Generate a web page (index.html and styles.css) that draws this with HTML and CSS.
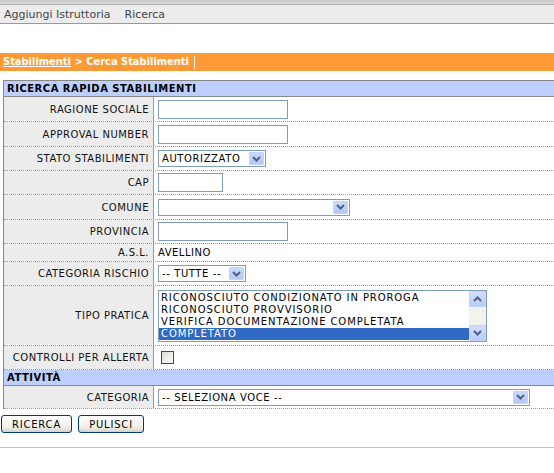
FILE: index.html
```html
<!DOCTYPE html>
<html>
<head>
<meta charset="utf-8">
<link rel="stylesheet" href="styles.css">
</head>
<body>
<div class="topstrip"></div>
<nav class="menu">
  <span class="menu-item">Aggiungi Istruttoria</span>
  <span class="menu-item">Ricerca</span>
</nav>
<div class="crumbs"><a class="crumb-link">Stabilimenti</a> &gt; Cerca Stabilimenti<span class="caret"></span></div>

<div class="form">
  <div class="section">RICERCA RAPIDA STABILIMENTI</div>
  <div class="row h25">
    <div class="label">RAGIONE SOCIALE</div>
    <div class="value"><span class="input w130"></span></div>
  </div>
  <div class="row h25">
    <div class="label">APPROVAL NUMBER</div>
    <div class="value"><span class="input w130"></span></div>
  </div>
  <div class="row">
    <div class="label">STATO STABILIMENTI</div>
    <div class="value"><span class="select w108"><span class="sel-text">AUTORIZZATO</span><span class="arrow"><svg width="9" height="6" viewBox="0 0 9 6"><path d="M1 1 L4.5 4.5 L8 1" fill="none" stroke="#4d6185" stroke-width="2"/></svg></span></span></div>
  </div>
  <div class="row">
    <div class="label">CAP</div>
    <div class="value"><span class="input w65"></span></div>
  </div>
  <div class="row h25">
    <div class="label">COMUNE</div>
    <div class="value"><span class="select w192"><span class="sel-text"></span><span class="arrow"><svg width="9" height="6" viewBox="0 0 9 6"><path d="M1 1 L4.5 4.5 L8 1" fill="none" stroke="#4d6185" stroke-width="2"/></svg></span></span></div>
  </div>
  <div class="row">
    <div class="label">PROVINCIA</div>
    <div class="value"><span class="input w130"></span></div>
  </div>
  <div class="row short">
    <div class="label">A.S.L.</div>
    <div class="value"><span class="plain">AVELLINO</span></div>
  </div>
  <div class="row">
    <div class="label">CATEGORIA RISCHIO</div>
    <div class="value"><span class="select w88"><span class="sel-text">-- TUTTE --</span><span class="arrow"><svg width="9" height="6" viewBox="0 0 9 6"><path d="M1 1 L4.5 4.5 L8 1" fill="none" stroke="#4d6185" stroke-width="2"/></svg></span></span></div>
  </div>
  <div class="row tall">
    <div class="label">TIPO PRATICA</div>
    <div class="value">
      <div class="listbox">
        <div class="options">
          <div class="opt">RICONOSCIUTO CONDIZIONATO IN PROROGA</div>
          <div class="opt">RICONOSCIUTO PROVVISORIO</div>
          <div class="opt">VERIFICA DOCUMENTAZIONE COMPLETATA</div>
          <div class="opt selected">COMPLETATO</div>
        </div>
        <div class="scrollbar">
          <span class="sbtn"><svg width="9" height="6" viewBox="0 0 9 6"><path d="M1 5 L4.5 1.5 L8 5" fill="none" stroke="#4d6185" stroke-width="2"/></svg></span>
          <span class="strack"></span>
          <span class="sbtn"><svg width="9" height="6" viewBox="0 0 9 6"><path d="M1 1 L4.5 4.5 L8 1" fill="none" stroke="#4d6185" stroke-width="2"/></svg></span>
        </div>
      </div>
    </div>
  </div>
  <div class="row">
    <div class="label">CONTROLLI PER ALLERTA</div>
    <div class="value"><span class="checkbox"></span></div>
  </div>
  <div class="section">ATTIVITÀ</div>
  <div class="row compact">
    <div class="label">CATEGORIA</div>
    <div class="value"><span class="select w372"><span class="sel-text">-- SELEZIONA VOCE --</span><span class="arrow"><svg width="9" height="6" viewBox="0 0 9 6"><path d="M1 1 L4.5 4.5 L8 1" fill="none" stroke="#4d6185" stroke-width="2"/></svg></span></span></div>
  </div>
</div>

<div class="buttons">
  <button class="btn b1">RICERCA</button>
  <button class="btn b2">PULISCI</button>
</div>
<div class="footer-line"></div>
</body>
</html>
```

FILE: styles.css
```css
html, body {
  margin: 0;
  padding: 0;
  background: #ffffff;
  overflow: hidden;
}
body {
  font-family: "DejaVu Sans", Verdana, sans-serif;
  font-size: 10px;
  color: #000;
}
.topstrip {
  height: 5px;
  background: linear-gradient(#c9c9c9, #dadada);
  border-bottom: 1px solid #b0b0b0;
  box-sizing: border-box;
}
.menu {
  height: 19px;
  background: #ededed;
  border-bottom: 1px solid #999;
  box-sizing: border-box;
  display: flex;
  align-items: center;
  padding-left: 4px;
  gap: 14px;
  font-size: 11px;
  color: #444;
}
.crumbs {
  margin-top: 29px;
  height: 18px;
  background: #fe9a35;
  color: #fff;
  font-family: "DejaVu Sans Condensed", "DejaVu Sans", sans-serif;
  font-weight: bold;
  font-size: 11px;
  line-height: 18px;
  padding-left: 3px;
  display: flex;
  align-items: center;
  white-space: pre;
}
.crumb-link {
  color: #fff;
  text-decoration: underline;
}
.caret {
  display: inline-block;
  width: 1px;
  height: 13px;
  background: #fff;
  margin-left: 5px;
}
.form {
  margin-top: 9px;
  margin-left: 3px;
  border-top: 1px solid #888;
  border-left: 1px solid #888;
}
.section {
  height: 16px;
  background: #bccfff;
  border-bottom: 1px solid #888;
  box-sizing: border-box;
  font-weight: bold;
  letter-spacing: 0.5px;
  line-height: 15px;
  padding-left: 3px;
}
.row {
  display: grid;
  grid-template-columns: 150px 1fr;
  height: 24px;
  border-bottom: 1px dotted #999;
  box-sizing: border-box;
}
.row.h25 { height: 25px; }
.row.short { height: 18px; }
.row.tall { height: 60px; }
.row.compact { height: 23px; }
.label {
  background: #ececec;
  border-right: 1px solid #999;
  display: flex;
  align-items: center;
  justify-content: flex-end;
  padding-right: 4px;
  letter-spacing: 0.5px;
  white-space: nowrap;
  color: #111;
}
.value {
  display: flex;
  align-items: center;
  padding-left: 4px;
}
.plain {
  letter-spacing: 0.5px;
}
.input {
  display: block;
  height: 19px;
  border: 1px solid #7f9db9;
  box-sizing: border-box;
  background: #fff;
}
.w130 { width: 130px; }
.w65 { width: 65px; }
.select {
  display: flex;
  align-items: center;
  height: 17px;
  border: 1px solid #7f9db9;
  box-sizing: border-box;
  background: #fff;
  padding: 1px;
  letter-spacing: 0.6px;
}
.w108 { width: 108px; }
.w192 { width: 192px; }
.w88 { width: 88px; }
.w372 { width: 372px; }
.sel-text {
  flex: 1;
  padding-left: 2px;
  white-space: nowrap;
  overflow: hidden;
}
.arrow {
  width: 15px;
  height: 13px;
  background: linear-gradient(#c9d9fd, #b4c8f6);
  border: 1px solid #c3d3fd;
  box-sizing: border-box;
  border-radius: 1px;
  display: flex;
  align-items: center;
  justify-content: center;
}
.listbox {
  width: 329px;
  height: 52px;
  border: 1px solid #7f9db9;
  box-sizing: border-box;
  display: flex;
  background: #fff;
}
.options {
  flex: 1;
  padding-top: 1px;
  letter-spacing: 0.9px;
  overflow: hidden;
}
.opt {
  height: 12px;
  line-height: 12px;
  padding-left: 2px;
  white-space: nowrap;
}
.opt.selected {
  background: #316ac5;
  color: #fff;
}
.scrollbar {
  width: 17px;
  display: flex;
  flex-direction: column;
  background: #f3f3ee;
}
.sbtn {
  height: 16px;
  background: linear-gradient(#d2defc, #b9cbf7);
  border: 1px solid #c3d3fd;
  box-sizing: border-box;
  display: flex;
  align-items: center;
  justify-content: center;
}
.strack { flex: 1; }
.checkbox {
  display: block;
  margin-left: 3px;
  width: 13px;
  height: 13px;
  border: 1px solid #1c5180;
  box-sizing: border-box;
  background: linear-gradient(135deg, #dcdcd7, #fbfbf9);
}
.buttons {
  display: flex;
  gap: 6px;
  margin-top: 6px;
  margin-left: 1px;
}
.btn {
  font-family: "DejaVu Sans", Verdana, sans-serif;
  font-size: 10px;
  letter-spacing: 0.8px;
  color: #000;
  height: 18px;
  padding: 0;
  border: 1px solid #003c74;
  border-radius: 3px;
  background: linear-gradient(#ffffff, #f0f0ea 70%, #d6d0c5);
  margin: 0;
}
.b1 { width: 71px; }
.b2 { width: 66px; }
.footer-line {
  margin-top: 14px;
  border-top: 1px solid #c4c4c4;
}
```
